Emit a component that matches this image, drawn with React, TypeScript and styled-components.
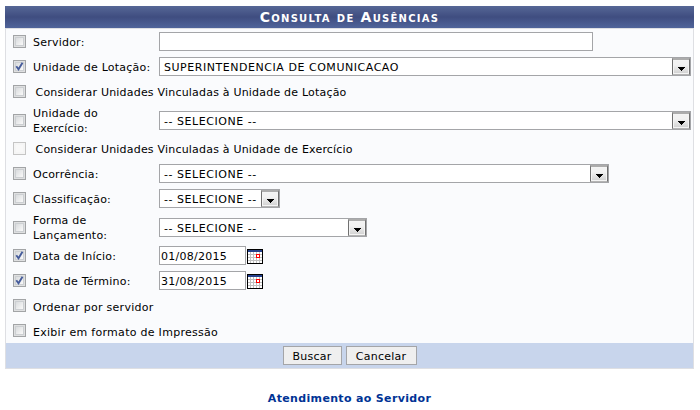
import { Fragment } from 'react';
import styled, { createGlobalStyle } from 'styled-components';

const GlobalStyle = createGlobalStyle`
  * {
    box-sizing: border-box;
  }
  body {
    margin: 0;
    background: #fff;
    color: #000;
    font-family: 'DejaVu Sans', Verdana, sans-serif;
    font-size: 11px;
  }
`;

const Page = styled.div`
  width: 700px;
  height: 410px;
  padding: 6px 6px 0 5px;
  overflow: hidden;
`;

const Title = styled.h1`
  height: 22px;
  margin: 0;
  background: linear-gradient(#566796, #3f4d80 50%, #50649a);
  color: #fff;
  font-size: 14px;
  font-weight: bold;
  font-variant: small-caps;
  letter-spacing: 1.25px;
  line-height: 22px;
  text-align: center;
`;

const Form = styled.form`
  border: 1px solid #dedfe3;
  background: #fafbfd;
`;

const Row = styled.div<{ $tall?: boolean }>`
  display: flex;
  align-items: center;
  height: ${(p) => (p.$tall ? 31 : 25)}px;
  margin-top: ${(p) => (p.$tall ? 1 : 0)}px;
  padding-left: 7px;
`;

const Check = styled.span<{ $disabled?: boolean }>`
  display: flex;
  align-items: center;
  justify-content: center;
  width: 13px;
  height: 13px;
  border: 1px solid ${(p) => (p.$disabled ? '#c5c5c5' : '#a2a4a6')};
  background: ${(p) => (p.$disabled ? '#f8f8f8' : 'linear-gradient(135deg, #d0d3d6, #f6f6f6 75%)')};
  box-shadow: inset 0 0 0 1px ${(p) => (p.$disabled ? '#f5f5f5' : '#dfe0e1')},
    inset 0 0 0 2px ${(p) => (p.$disabled ? '#f5f5f5' : '#cccfd2')};
`;

const Label = styled.span<{ $single?: boolean }>`
  width: 126px;
  margin-left: 7px;
  padding-top: ${(p) => (p.$single ? 2 : 0)}px;
  letter-spacing: 0.22px;
  line-height: 15px;
  white-space: pre;
`;

const WideLabel = styled.span<{ $indent?: boolean }>`
  margin-left: ${(p) => (p.$indent ? 9.5 : 7)}px;
  padding-top: ${(p) => (p.$indent ? 2 : 4)}px;
  letter-spacing: ${(p) => (p.$indent ? 0.2 : 0.28)}px;
  line-height: 15px;
  white-space: nowrap;
`;

const Input = styled.input<{ $width: number }>`
  width: ${(p) => p.$width}px;
  height: 19px;
  padding: 2px 1px 0;
  border: 1px solid #a4a5a8;
  border-radius: 0;
  outline: none;
  background: #fff;
  color: #000;
  font: inherit;
  letter-spacing: 0.25px;
`;

const SelectBox = styled.div<{ $width: number }>`
  display: flex;
  justify-content: space-between;
  width: ${(p) => p.$width}px;
  height: 19px;
  padding-left: 4px;
  border: 1px solid #a4a5a8;
  background: #fff;
  letter-spacing: 0.54px;
  line-height: 19px;
  white-space: nowrap;
`;

const SelectButton = styled.span`
  display: flex;
  align-items: center;
  justify-content: center;
  flex: none;
  width: 18px;
  height: 17px;
  padding-top: 3px;
  border: 1px solid #707070;
  border-top: 2px solid #acacac;
  border-bottom-color: #b4b4b4;
  background: linear-gradient(#f2f2f2 35%, #d0d0d0);
  box-shadow: inset 0 0 0 1px #f4f4f4;
`;

const CalendarSvg = styled.svg`
  margin: 2px 0 0 1px;
`;

const Footer = styled.div`
  display: flex;
  justify-content: center;
  gap: 4px;
  height: 25px;
  padding-top: 3px;
  background: #c8d5ec;
`;

const Button = styled.button<{ $width: number }>`
  width: ${(p) => p.$width}px;
  height: 19px;
  padding: 2px 0 0;
  border: 1px solid #a4a5a8;
  border-radius: 0;
  background: #efefef;
  color: #000;
  font: inherit;
  letter-spacing: 0.25px;
`;

const Support = styled.div`
  margin-top: 22px;
  color: #003395;
  font-weight: bold;
  letter-spacing: 0.34px;
  line-height: 15px;
  text-align: center;
`;

const CheckBox = ({ checked, disabled }: { checked?: boolean; disabled?: boolean }) => (
  <Check $disabled={disabled} role="checkbox" aria-checked={!!checked}>
    {checked && (
      <svg width="9" height="9" viewBox="0 0 9 9">
        <path d="M1.3 4.2 L3.5 7.2 L7.5 0.8" fill="none" stroke="#465c9b" strokeWidth="1.9" />
      </svg>
    )}
  </Check>
);

const Select = ({ value, width }: { value: string; width: number }) => (
  <SelectBox $width={width}>
    <span>{value}</span>
    <SelectButton>
      <svg width="7" height="4" viewBox="0 0 7 4" shapeRendering="crispEdges">
        <path d="M0 0h7v1H6v1H5v1H4v1H3V3H2V2H1V1H0z" />
      </svg>
    </SelectButton>
  </SelectBox>
);

const Calendar = () => (
  <CalendarSvg width="16" height="15" viewBox="0 0 16 15" shapeRendering="crispEdges">
    <path d="M0 0h16v15H0z" />
    <path d="M1 1h14v2H1z" fill="#24408c" />
    <path d="M1 3h14v11H1z" fill="#c0c0c0" />
    <path
      d="M1 3h2v2H1zM4 3h2v2H4zM7 3h2v2H7zM10 3h2v2h-2zM13 3h2v2h-2zM1 6h2v2H1zM4 6h2v2H4zM7 6h2v2H7zM13 6h2v2h-2zM1 9h2v2H1zM4 9h2v2H4zM7 9h2v2H7zM10 9h2v2h-2zM13 9h2v2h-2zM1 12h2v2H1zM4 12h2v2H4zM7 12h2v2H7zM10 12h2v2h-2zM13 12h2v2h-2z"
      fill="#fff"
    />
    <path d="M9.5 5.5h3v3h-3z" fill="#fff" stroke="#f00" />
  </CalendarSvg>
);

type Field = {
  label: string;
  kind: 'text' | 'select' | 'date' | 'indented' | 'plain';
  value?: string;
  width?: number;
  checked?: boolean;
  disabled?: boolean;
};

const fields: Field[] = [
  { label: 'Servidor:', kind: 'text', value: '', width: 434 },
  { label: 'Unidade de Lotação:', kind: 'select', value: 'SUPERINTENDENCIA DE COMUNICACAO', width: 532, checked: true },
  { label: 'Considerar Unidades Vinculadas à Unidade de Lotação', kind: 'indented' },
  { label: 'Unidade do\nExercício:', kind: 'select', value: '-- SELECIONE --', width: 532 },
  { label: 'Considerar Unidades Vinculadas à Unidade de Exercício', kind: 'indented', disabled: true },
  { label: 'Ocorrência:', kind: 'select', value: '-- SELECIONE --', width: 450 },
  { label: 'Classificação:', kind: 'select', value: '-- SELECIONE --', width: 121 },
  { label: 'Forma de\nLançamento:', kind: 'select', value: '-- SELECIONE --', width: 208 },
  { label: 'Data de Início:', kind: 'date', value: '01/08/2015', width: 87, checked: true },
  { label: 'Data de Término:', kind: 'date', value: '31/08/2015', width: 87, checked: true },
  { label: 'Ordenar por servidor', kind: 'plain' },
  { label: 'Exibir em formato de Impressão', kind: 'plain' },
];

const FieldContent = ({ field }: { field: Field }) => {
  const { label, kind, value = '', width = 0 } = field;
  if (kind === 'indented' || kind === 'plain') {
    return <WideLabel $indent={kind === 'indented'}>{label}</WideLabel>;
  }
  return (
    <Fragment>
      <Label $single={!label.includes('\n')}>{label}</Label>
      {kind === 'select' ? <Select value={value} width={width} /> : <Input $width={width} defaultValue={value} />}
      {kind === 'date' && <Calendar />}
    </Fragment>
  );
};

const App = () => {
  return (
    <Page>
      <GlobalStyle />
      <Title>Consulta de Ausências</Title>
      <Form>
        {fields.map((field) => (
          <Row key={field.label} $tall={field.label.includes('\n')}>
            <CheckBox checked={field.checked} disabled={field.disabled} />
            <FieldContent field={field} />
          </Row>
        ))}
        <Footer>
          <Button type="button" $width={59}>
            Buscar
          </Button>
          <Button type="button" $width={71}>
            Cancelar
          </Button>
        </Footer>
      </Form>
      <Support>Atendimento ao Servidor</Support>
    </Page>
  );
};
export default App;
